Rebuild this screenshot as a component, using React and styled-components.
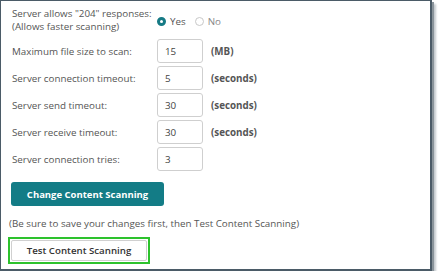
import React from 'react';
import styled, { createGlobalStyle } from 'styled-components';

const Global = createGlobalStyle`
  html, body { margin: 0; padding: 0; background: #fff; }
  body { font-family: "Open Sans", "Liberation Sans", sans-serif; }
`;

const Frame = styled.div`
  box-sizing: border-box;
  width: 432px;
  height: 271px;
  overflow: hidden;
  border: solid #4b5b67;
  border-width: 1px 2px 2px 1px;
  box-shadow: 2px 2px 0 #8a949b, 4px 4px 2px #c4c9cd;
  background: #fff;
  padding: 6px 0 0 11px;
  color: #555;
  font-size: 9.8px;
`;

const Form = styled.div`
  display: grid;
  grid-template-columns: 145px 46px auto;
  row-gap: 3px;
  align-items: center;
  white-space: nowrap;
`;

const Label = styled.div`
  line-height: 13px;
`;

const Radios = styled.div`
  grid-column: 2 / span 2;
  display: flex;
  align-items: center;
  gap: 9px;
  padding-top: 3px;
`;

const RadioOpt = styled.label`
  display: flex;
  align-items: center;
  gap: 4px;
  color: ${p => (p.$on ? '#555' : '#888')};
`;

const Dot = styled.span`
  width: 9px;
  height: 9px;
  border-radius: 50%;
  box-sizing: border-box;
  border: ${p => (p.$on ? '3px solid #167a85' : '1px solid #c8c8c8')};
  background: #fff;
`;

const Spacer = styled.div`
  grid-column: 1 / -1;
  height: 0;
`;

const Input = styled.div`
  height: 24px;
  border: 1px solid #cfcfcf;
  border-radius: 3px;
  box-sizing: border-box;
  padding-left: 7px;
  display: flex;
  align-items: center;
  color: #444;
`;

const Unit = styled.div`
  padding-left: 8px;
  font-weight: 700;
  color: #555;
`;

const Primary = styled.button`
  margin-top: 11px;
  margin-left: -1px;
  width: 153px;
  height: 24px;
  background: #137c86;
  color: #fff;
  border: none;
  border-radius: 3px;
  font-family: inherit;
  font-size: 9.5px;
  font-weight: 700;
  padding: 0;
  display: block;
`;

const Note = styled.div`
  margin: 11px 0 0 -3px;
  line-height: 13px;
  white-space: nowrap;
`;

const Highlight = styled.div`
  margin: 7px 0 0 -4px;
  width: 142px;
  height: 27px;
  border: 2px solid #2dc22d;
  box-sizing: border-box;
  padding: 1px;
`;

const Secondary = styled.button`
  width: 100%;
  height: 100%;
  background: #fff;
  border: 1px solid #d0d0d0;
  border-radius: 2px;
  font-family: inherit;
  font-size: 9.7px;
  font-weight: 600;
  color: #333;
  padding: 0;
  display: block;
`;

const rows = [
  ['Maximum file size to scan:', '15', '(MB)'],
  ['Server connection timeout:', '5', '(seconds)'],
  ['Server send timeout:', '30', '(seconds)'],
  ['Server receive timeout:', '30', '(seconds)'],
  ['Server connection tries:', '3', ''],
];

export default function App() {
  return (
    <>
      <Global />
      <Frame>
        <Form>
          <Label>
            Server allows "204" responses:
            <br />
            (Allows faster scanning)
          </Label>
          <Radios>
            <RadioOpt $on><Dot $on />Yes</RadioOpt>
            <RadioOpt><Dot />No</RadioOpt>
          </Radios>
          <Spacer />
          {rows.map(([l, v, u]) => (
            <React.Fragment key={l}>
              <Label>{l}</Label>
              <Input>{v}</Input>
              <Unit>{u}</Unit>
            </React.Fragment>
          ))}
        </Form>
        <Primary>Change Content Scanning</Primary>
        <Note>(Be sure to save your changes first, then Test Content Scanning)</Note>
        <Highlight>
          <Secondary>Test Content Scanning</Secondary>
        </Highlight>
      </Frame>
    </>
  );
}
